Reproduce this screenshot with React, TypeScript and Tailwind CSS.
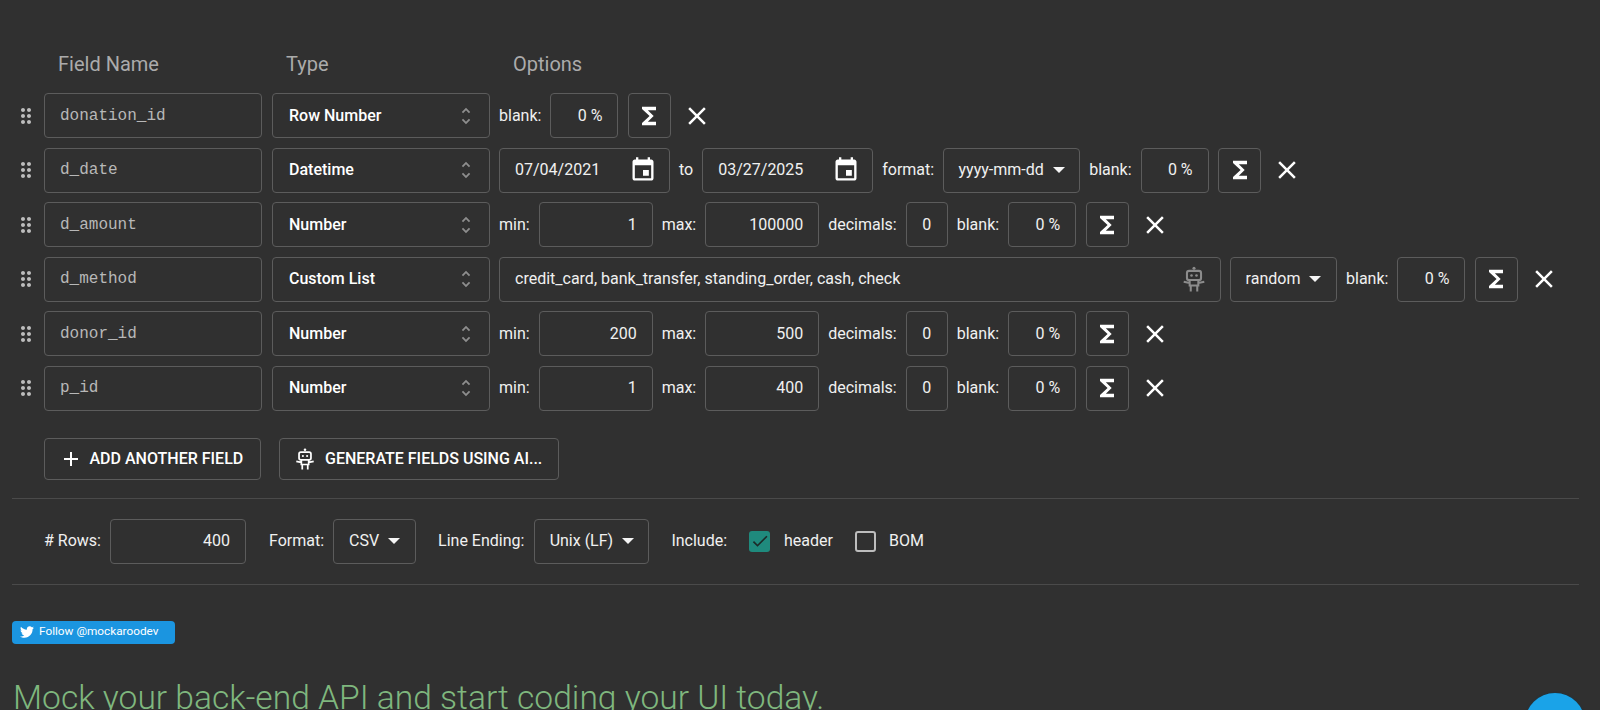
import React from "react";
import { FaTwitter } from "react-icons/fa";

const P = {
  drag: "M11 18c0 1.1-.9 2-2 2s-2-.9-2-2 .9-2 2-2 2 .9 2 2zm-2-8c-1.1 0-2 .9-2 2s.9 2 2 2 2-.9 2-2-.9-2-2-2zm0-6c-1.1 0-2 .9-2 2s.9 2 2 2 2-.9 2-2-.9-2-2-2zm6 4c1.1 0 2-.9 2-2s-.9-2-2-2-2 .9-2 2 .9 2 2 2zm0 2c-1.1 0-2 .9-2 2s.9 2 2 2 2-.9 2-2-.9-2-2-2zm0 6c-1.1 0-2 .9-2 2s.9 2 2 2 2-.9 2-2-.9-2-2-2z",
  unfold: "M12 5.83 15.17 9l1.41-1.41L12 3 7.41 7.59 8.83 9 12 5.83zm0 12.34L8.83 15l-1.41 1.41L12 21l4.59-4.59L15.17 15 12 18.17z",
  sigma: "M18 4H6v2l6.5 6L6 18v2h12v-3h-7l5-5-5-5h7z",
  close: "M19 6.41 17.59 5 12 10.59 6.41 5 5 6.41 10.59 12 5 17.59 6.41 19 12 13.41 17.59 19 19 17.59 13.41 12z",
  cal: "M17 12h-5v5h5v-5zM16 1v2H8V1H6v2H5c-1.11 0-1.99.9-1.99 2L3 19c0 1.1.89 2 2 2h14c1.1 0 2-.9 2-2V5c0-1.1-.9-2-2-2h-1V1h-2zm3 18H5V8h14v11z",
  add: "M19 13h-6v6h-2v-6H5v-2h6V5h2v6h6v2z",
  check: "M9 16.17 4.83 12l-1.42 1.41L9 19 21 7l-1.41-1.41z",
};

function Icon({ d, className }: { d: string; className: string }) {
  return (
    <svg viewBox="0 0 24 24" fill="currentColor" className={className}>
      <path d={d} />
    </svg>
  );
}

function Robot({ className }: { className: string }) {
  return (
    <svg viewBox="0 0 24 24" fill="none" stroke="currentColor" strokeWidth="1.9" className={className}>
      <circle cx="12" cy="2" r="1.4" fill="currentColor" stroke="none" />
      <rect x="5.5" y="4.5" width="13" height="8.5" rx="2" />
      <circle cx="9.7" cy="8.7" r="1.2" fill="currentColor" stroke="none" />
      <circle cx="14.3" cy="8.7" r="1.2" fill="currentColor" stroke="none" />
      <path d="M8 13v5h8v-5M2.5 14.5l5.5 1.2M21.5 14.5l-5.5 1.2M9 18v5.5M15 18v5.5" />
    </svg>
  );
}

const box = "h-[45px] shrink-0 rounded-[4px] border border-[#5c5c5c] flex items-center";

function Label({ children }: { children: React.ReactNode }) {
  return <span className="shrink-0 text-[16px] text-[#f0f0f0]">{children}</span>;
}

function NumBox({ w, children }: { w: string; children: React.ReactNode }) {
  return <div className={`${box} ${w} justify-end pr-[15px] text-[16px] text-[#f0f0f0]`}>{children}</div>;
}

function Caret() {
  return <span className="ml-[9px] h-0 w-0 border-x-[6px] border-t-[6px] border-x-transparent border-t-[#f5f5f5]" />;
}

function SelectBox({ w, label }: { w: string; label: string }) {
  return (
    <div className={`${box} ${w} justify-center text-[16px] text-[#f0f0f0]`}>
      {label}
      <Caret />
    </div>
  );
}

function Blank() {
  return (
    <>
      <Label>blank:</Label>
      <div className={`${box} w-[68px] justify-end pr-[15px] text-[16px] text-[#f0f0f0]`}>0 %</div>
    </>
  );
}

function Tail() {
  return (
    <>
      <div className={`${box} ml-[0.5px] w-[43px] justify-center text-white`}>
        <Icon d={P.sigma} className="w-[28px] h-[28px]" />
      </div>
      <div className="w-[34px] flex justify-center text-white">
        <Icon d={P.close} className="w-[30px] h-[30px]" />
      </div>
    </>
  );
}

function DateBox({ w, value }: { w: string; value: string }) {
  return (
    <div className={`${box} ${w} pl-[15px] pr-[12px] justify-between text-[16px] text-[#f0f0f0]`}>
      {value}
      <Icon d={P.cal} className="w-[28px] h-[28px] text-white" />
    </div>
  );
}

function NumberOpts({ min, max }: { min: string; max: string }) {
  return (
    <>
      <Label>min:</Label>
      <NumBox w="w-[114px]">{min}</NumBox>
      <Label>max:</Label>
      <NumBox w="w-[114px]">{max}</NumBox>
      <Label>decimals:</Label>
      <div className={`${box} w-[42px] justify-center text-[16px] text-[#f0f0f0]`}>0</div>
      <Blank />
      <Tail />
    </>
  );
}

function Row({ name, type, children }: { name: string; type: string; children: React.ReactNode }) {
  return (
    <div className="flex items-center h-[45px]">
      <div className="w-[32px] shrink-0 pl-[2px] text-[#bdbdbd]">
        <Icon d={P.drag} className="w-[24px] h-[24px]" />
      </div>
      <div className={`${box} w-[218px] pl-[15px] font-['Liberation_Mono',monospace] text-[16px] font-light text-[#b8b8b8]`}>
        {name}
      </div>
      <div className={`${box} w-[218px] ml-[10px] pl-[16px] pr-[12px] justify-between text-[16px] font-medium text-white`}>
        {type}
        <Icon d={P.unfold} className="w-[22px] h-[24px] text-[#8e8e8e]" />
      </div>
      <div className="flex items-center gap-[9px] ml-[9px]">{children}</div>
    </div>
  );
}

export default function App() {
  return (
    <div className="relative h-[710px] overflow-hidden bg-[#303030] font-['Roboto',sans-serif]">
      <div className="pl-[12px] pr-[21px] pt-[52px]">
        <div className="flex h-[24px] items-center text-[20px] text-[#ababab]">
          <span className="ml-[46px] w-[228px]">Field Name</span>
          <span className="w-[227px]">Type</span>
          <span>Options</span>
        </div>
        <div className="mt-[17px] flex flex-col gap-[9.5px]">
          <Row name="donation_id" type="Row Number">
            <Blank />
            <Tail />
          </Row>
          <Row name="d_date" type="Datetime">
            <DateBox w="w-[171px]" value="07/04/2021" />
            <Label>to</Label>
            <DateBox w="w-[171px]" value="03/27/2025" />
            <Label>format:</Label>
            <SelectBox w="w-[137px]" label="yyyy-mm-dd" />
            <Blank />
            <Tail />
          </Row>
          <Row name="d_amount" type="Number">
            <NumberOpts min="1" max="100000" />
          </Row>
          <Row name="d_method" type="Custom List">
            <div className={`${box} w-[722px] pl-[15px] pr-[13px] justify-between text-[16px] text-[#f0f0f0]`}>
              credit_card, bank_transfer, standing_order, cash, check
              <Robot className="w-[26px] h-[26px] text-[#8c8c8c]" />
            </div>
            <SelectBox w="w-[107px]" label="random" />
            <Blank />
            <Tail />
          </Row>
          <Row name="donor_id" type="Number">
            <NumberOpts min="200" max="500" />
          </Row>
          <Row name="p_id" type="Number">
            <NumberOpts min="1" max="400" />
          </Row>
        </div>
        <div className="mt-[27px] ml-[32px] flex gap-[18px] text-[16px] font-medium text-white">
          <div className="flex h-[42px] w-[217px] items-center rounded-[4px] border border-[#5c5c5c] pl-[14px]">
            <Icon d={P.add} className="w-[24px] h-[24px] mr-[6.5px]" />
            ADD ANOTHER FIELD
          </div>
          <div className="flex h-[42px] w-[280px] items-center rounded-[4px] border border-[#5c5c5c] pl-[14px]">
            <Robot className="w-[22px] h-[22px] mr-[9px]" />
            GENERATE FIELDS USING AI...
          </div>
        </div>
        <div className="mt-[18px] h-px w-[1567px] bg-[#4a4a4a]" />
        <div className="mt-[20px] ml-[32px] flex h-[45px] items-center text-[16px] text-[#f0f0f0]">
          <span># Rows:</span>
          <div className={`${box} ml-[9px] w-[136px] justify-end pr-[15px]`}>400</div>
          <span className="ml-[23px]">Format:</span>
          <div className={`${box} ml-[9px] w-[83px] justify-center`}>CSV<Caret /></div>
          <span className="ml-[22px]">Line Ending:</span>
          <div className={`${box} ml-[10px] w-[115px] justify-center`}>Unix (LF)<Caret /></div>
          <span className="ml-[22px]">Include:</span>
          <div className="ml-[22px] flex h-[21px] w-[21px] items-center justify-center rounded-[3px] bg-[#1f8a7d] text-[#1c2a28]">
            <Icon d={P.check} className="w-[20px] h-[20px]" />
          </div>
          <span className="ml-[14px]">header</span>
          <div className="ml-[22px] h-[21px] w-[21px] rounded-[3px] border-2 border-[#bdbdbd]" />
          <span className="ml-[13px]">BOM</span>
        </div>
        <div className="mt-[20px] h-px w-[1567px] bg-[#4a4a4a]" />
        <div className="mt-[36px] flex h-[23px] w-[163px] items-center rounded-[4px] bg-[#1b95e0] pl-[8px] text-[11.8px] text-white">
          <FaTwitter className="w-[14px] h-[14px] mr-[5px]" />
          Follow @mockaroodev
        </div>
        <h1 className="mt-[30px] ml-[1px] text-[33.6px] font-light leading-[48px] whitespace-nowrap text-[#7fb77e]">
          Mock your back-end API and start coding your UI today.
        </h1>
      </div>
      <div className="absolute left-[1525px] top-[693px] h-[60px] w-[60px] rounded-full bg-[#1aa3e8] shadow-[0_0_2px_#12384d]" />
    </div>
  );
}
